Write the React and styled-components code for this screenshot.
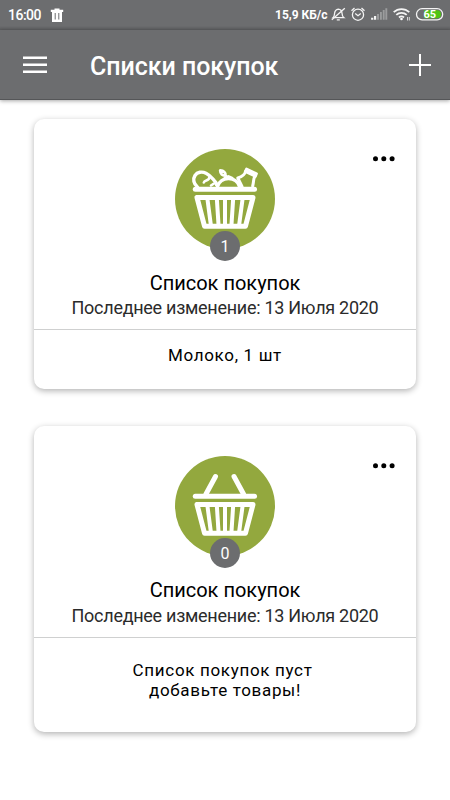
import React from 'react';
import styled, { createGlobalStyle } from 'styled-components';

const lists = [
  {
    id: 1,
    title: 'Список покупок',
    changed: '13 Июля 2020',
    count: 1,
    lines: ['Молоко, 1 шт'],
  },
  {
    id: 2,
    title: 'Список покупок',
    changed: '13 Июля 2020',
    count: 0,
    lines: ['Список покупок пуст ', 'добавьте товары!'],
  },
];

function App() {
  return (
    <Screen>
      <GlobalStyle />
      <StatusBar />
      <Header>
        <MenuIcon />
        <Title>Списки покупок</Title>
        <PlusIcon />
      </Header>
      <Content>
        {lists.map((list) => (
          <ShoppingList key={list.id} list={list} />
        ))}
      </Content>
    </Screen>
  );
}

export default App;

function ShoppingList({ list }) {
  const empty = list.count === 0;

  return (
    <Card $empty={empty}>
      <CardTop $empty={empty}>
        <MoreIcon />
        <BasketWrap>
          <BasketIcon full={!empty} />
          <Count>{list.count}</Count>
        </BasketWrap>
        <ListTitle>{list.title}</ListTitle>
        <Changed $empty={empty}>Последнее изменение: {list.changed}</Changed>
      </CardTop>
      <CardBody $empty={empty}>
        {list.lines.map((line) => (
          <Line key={line}>{line}</Line>
        ))}
      </CardBody>
    </Card>
  );
}

function StatusBar() {
  return (
    <Status>
      <Clock>16:00</Clock>
      <TrashIcon width="14" height="15" viewBox="0 0 14 15">
        <path d="M4.5 0.500h5v1.200H13.200v2.300H0.800V1.700h3.700z" fill="#fff" />
        <path d="M2 4h10v10H2z" fill="#fff" />
        <path d="M5.200 5v6.500M8.800 5v6.500" stroke="#6c6d6f" strokeWidth="1" />
      </TrashIcon>
      <Speed>15,9 КБ/с</Speed>
      <StatusIcons />
    </Status>
  );
}

function StatusIcons() {
  return (
    <svg width="120" height="24" viewBox="330 4 120 24" fill="none" stroke="#f4f4f4" strokeWidth="1.300">
      <path d="M333 18.700c1.500-1.300 1.500-3 1.600-4.500.3-2.500 1.700-3.800 3.700-4.100 2.200.2 3.500 1.600 3.700 4.100.1 1.800.3 3.200 1.900 4.500z" />
      <path d="M336.800 20.800h3M331.800 20.800L344.800 9.200" />
      <circle cx="358" cy="15.700" r="5.600" />
      <path d="M355.200 14.500l2.800 2.200 2.800-2.200M351.500 11.800l3-2.700M364.500 11.800l-3-2.700" />
      <path d="M372.200 20.800v-2M375.100 20.800v-3.700" strokeWidth="2.200" />
      <path d="M378 20.800v-5.800M380.900 20.800v-7.800M383.700 20.800V11M386.300 20.800V9.300" stroke="#9b9c9d" strokeWidth="1.900" />
      <path d="M393.700 13.200c4.400-4.200 11.200-4.200 15.600 0M396.300 15.900c2.900-2.800 7.500-2.800 10.400 0M399 18.500c1.500-1.400 3.500-1.400 5 0" strokeWidth="1.800" />
      <circle cx="401.500" cy="20" r="1.300" fill="#fff" stroke="none" />
      <path d="M407.500 18v3.500M409.300 18v3.500" strokeWidth=".8" />
      <rect x="416.500" y="9.700" width="26.200" height="11.200" rx="5.600" />
      <path d="M424 11.300h13a4 4 0 0 1 0 8h-13z" fill="#4fc414" stroke="none" />
      <BatteryText x="429.700" y="19.200" textAnchor="middle">65</BatteryText>
    </svg>
  );
}

function MenuIcon() {
  return (
    <svg width="24" height="18" viewBox="0 0 24 18">
      <path d="M0 1.700h24M0 8.700h24M0 15.700h24" stroke="#fff" strokeWidth="2.400" />
    </svg>
  );
}

function PlusIcon() {
  return (
    <svg width="22" height="22" viewBox="0 0 22 22">
      <path d="M0 11h22M11 0v22" stroke="#fff" strokeWidth="2" />
    </svg>
  );
}

function MoreIcon() {
  return (
    <MoreButton aria-label="Меню">
      <svg width="24" height="6" viewBox="0 0 24 6">
        <circle cx="3.500" cy="2.700" r="2.500" />
        <circle cx="11.800" cy="2.700" r="2.500" />
        <circle cx="20.100" cy="2.700" r="2.500" />
      </svg>
    </MoreButton>
  );
}

function BasketIcon({ full }) {
  return (
    <svg width="100" height="100" viewBox="0 0 100 100" fill="none" stroke="#fff" strokeLinecap="round" strokeLinejoin="round">
      <circle cx="50" cy="50" r="50" fill="#93a83e" stroke="none" />
      {full ? (
        <g strokeWidth="3.400">
          {/* bread */}
          <path d="M22.500 38C18.500 35 17.700 30 20 26.500c2.300-3.500 7-4.300 11-2.300 3.500 1.700 5.500 4.500 8 7 1.500 1.300 2.500 2.500 2.500 4.500" />
          <path d="M28.800 33.500c.5-2 2.700-1.800 4.200-2.800.8-.6 1.200-1.300 1.300-2.200M36 36.500l3-2" strokeWidth="2.600" />
          {/* tomato */}
          <path d="M42.500 37.500c1.500-5 6-8 11-8s9.500 3 11 8" />
          <path d="M53 28.500l-2.500-2c-3 .3-5.200-1.500-5.300-5 3.500.3 5.700 2 5.300 5M50 29l3.500-1.500 3.500 1.500" strokeWidth="2.800" />
          {/* milk */}
          <path d="M71.500 20l10 4.700-1.200 2.600-10-4.700z" strokeWidth="2.800" />
          <path d="M70.500 22.500C69.500 27 66 28 62.800 29l4.200 8.500M80 27c-2 3.500-1 5-2.300 10" strokeWidth="3" />
        </g>
      ) : (
        <path d="M40.500 20.500L31 38M59 20.500L68.500 38" strokeWidth="5" />
      )}
      <path d="M20.300 40.300h59.200" strokeWidth="5" />
      <path d="M22 48.500h56L70.500 77.200H29.500z" strokeWidth="5" />
      <path d="M32.300 49l3.700 28M41.800 49l1.800 28M50 49v28M58.200 49l-1.800 28M67.700 49l-3.700 28" strokeWidth="4" />
    </svg>
  );
}

const GlobalStyle = createGlobalStyle`
  * {
    box-sizing: border-box;
  }

  body {
    margin: 0;
    background: #fff;
    font-family: Roboto, "Liberation Sans", sans-serif;
  }

  svg {
    display: block;
    flex-shrink: 0;
  }
`;

const Screen = styled.div`
  width: 450px;
  height: 800px;
  overflow: hidden;
`;

const Status = styled.div`
  display: flex;
  align-items: center;
  height: 30px;
  padding-left: 8px;
  background: linear-gradient(#6c6d6f 26px, #5c5d5f 30px);
  color: #fff;
`;

const Clock = styled.span`
  width: 41px;
  font-size: 14px;
  font-weight: 500;
  letter-spacing: -0.5px;
`;

const TrashIcon = styled.svg`
  margin-left: 1px;
`;

const Speed = styled.span`
  width: 55px;
  margin-left: auto;
  font-size: 12px;
  font-weight: 700;
  white-space: nowrap;
`;

const BatteryText = styled.text`
  fill: #fff;
  stroke: none;
  font-size: 11px;
  font-weight: 700;
`;

const Header = styled.header`
  display: flex;
  align-items: center;
  height: 70px;
  padding: 0 19px 0 23px;
  background: #6c6d6f;
  border-bottom: 1px solid #555658;
  box-shadow: 0 1px 4px rgba(0, 0, 0, 0.35);
  color: #fff;
`;

const Title = styled.h1`
  flex: 1;
  margin: 3px 0 0 43px;
  font-size: 25px;
  font-weight: 500;
  letter-spacing: -0.05px;
`;

const Content = styled.main`
  display: flex;
  flex-direction: column;
  gap: 37px;
  padding: 19px 34px;
`;

const Card = styled.section`
  height: ${(props) => (props.$empty ? '306px' : '270px')};
  border-radius: 10px;
  background: #fff;
  box-shadow: 0 2px 6px rgba(0, 0, 0, 0.3);
  text-align: center;
`;

const CardTop = styled.div`
  position: relative;
  display: flex;
  flex-direction: column;
  align-items: center;
  height: ${(props) => (props.$empty ? '212px' : '211px')};
  padding-top: 30px;
  border-bottom: 1px solid #cfd0d0;
`;

const MoreButton = styled.button`
  position: absolute;
  top: 37px;
  right: 20px;
  padding: 0;
  border: 0;
  background: none;
`;

const BasketWrap = styled.div`
  position: relative;
  width: 100px;
  height: 100px;
`;

const Count = styled.span`
  position: absolute;
  left: 35px;
  top: 82px;
  width: 30px;
  height: 30px;
  border-radius: 50%;
  background: #6c6d6f;
  color: #fff;
  font-size: 16px;
  line-height: 31px;
`;

const ListTitle = styled.h2`
  margin: 22px 0 0;
  font-size: 20px;
  line-height: 24px;
  font-weight: 400;
  color: #000;
`;

const Changed = styled.div`
  margin-top: ${(props) => (props.$empty ? '3px' : '2px')};
  font-size: 18px;
  line-height: 22px;
  letter-spacing: -0.28px;
  color: #2b2b2b;
`;

const CardBody = styled.div`
  padding-top: ${(props) => (props.$empty ? '22px' : '15px')};
`;

const Line = styled.div`
  font-size: 17px;
  line-height: 20px;
  letter-spacing: 0.67px;
  white-space: pre;
  color: #000;
`;
